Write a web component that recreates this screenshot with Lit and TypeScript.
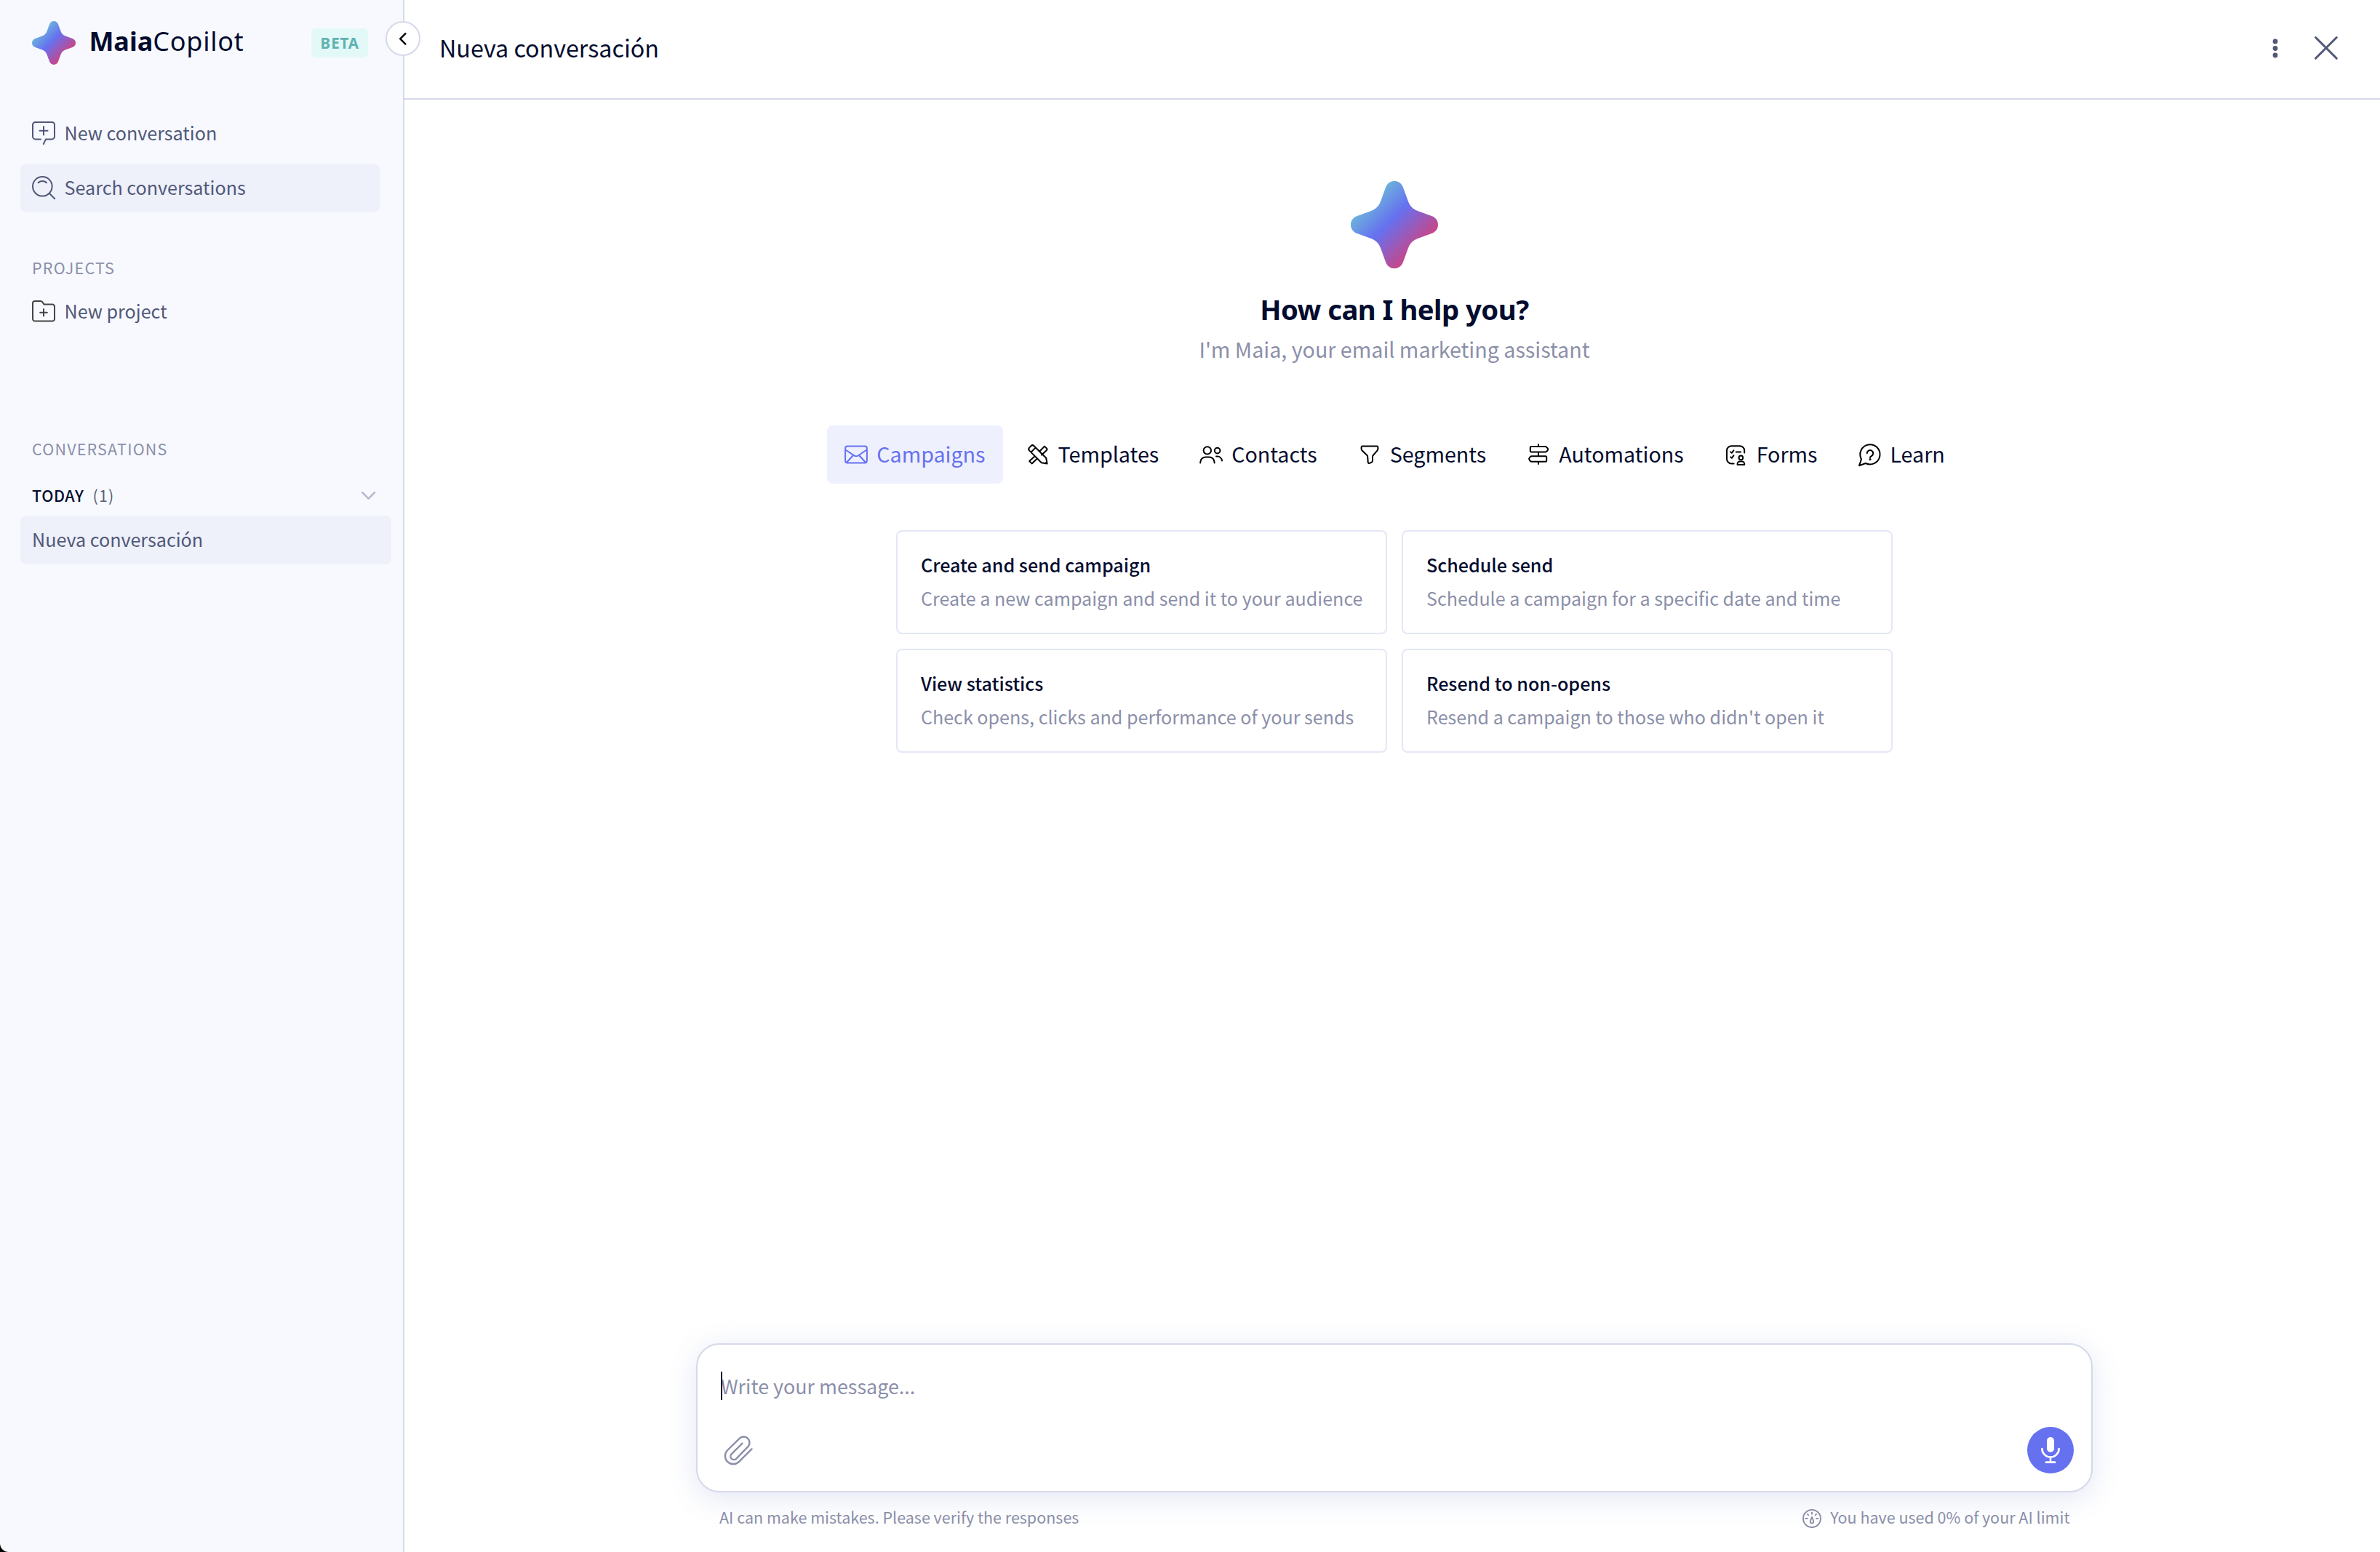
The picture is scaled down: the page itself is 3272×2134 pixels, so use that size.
import { LitElement, html, css, svg, TemplateResult, SVGTemplateResult } from "lit";
import { customElement, state } from "lit/decorators.js";

const glyphs: Record<string, SVGTemplateResult> = {
  chat: svg`<path d="M12 24.4H4.6A3.6 3.6 0 0 1 1 20.8V4.6A3.6 3.6 0 0 1 4.6 1H27.4A3.6 3.6 0 0 1 31 4.6V20.8A3.6 3.6 0 0 1 27.4 24.4H19L15.8 31M16 7v11.4M10.5 12.7h11"/>`,
  search: svg`<circle cx="14.3" cy="14.3" r="13.3"/><path d="M24 24l7.2 7.2M8.6 9.2c2.8-2.9 8.6-2.9 11.4 0"/>`,
  folder: svg`<path d="M1 26.5V5A3 3 0 0 1 4 2H11.8a3 3 0 0 1 2.4 1.2L16.6 6.6H28a3 3 0 0 1 3 3V26.5a3 3 0 0 1-3 3H4a3 3 0 0 1-3-3ZM16 13v9.6M11.2 17.8h9.6"/>`,
  mail: svg`<rect x="1.1" y="4.4" width="29.8" height="23.2" rx="3"/><path d="M2.2 10l10.6 7.2a5.6 5.6 0 0 0 6.4 0L29.8 10M3 26.8l8.8-9.6M29 26.8l-8.8-9.6"/>`,
  design: svg`<path d="M4.2 10.6a3 3 0 0 1 0-4.2L6.4 4.2a3 3 0 0 1 4.2 0L27.2 20.8 28.6 28.6 20.8 27.2ZM6.6 12.6l6-6M26 28.2l2.2-2.2M18.6 11.2L25 4.6l3 3a1.6 1.6 0 0 1 0 2.4l-7 6.6M11.4 18.4L4.2 25l3.4 3.4 7-6.6"/>`,
  people: svg`<circle cx="10.8" cy="10.4" r="5.2"/><path d="M1.2 27.6V26.8a7.4 7.4 0 0 1 7.4-7.4h4.6a7.4 7.4 0 0 1 7.4 7.4V27.6M23 18.4h1.4a6.6 6.6 0 0 1 6.6 6"/><circle cx="24.6" cy="10.6" r="3.8"/>`,
  funnel: svg`<path d="M6 4.6H26a1.4 1.4 0 0 1 1.4 1.4V8a4 4 0 0 1-1 2.6L20.8 17a3 3 0 0 0-.8 2V24.6a2 2 0 0 1-1 1.7l-3 1.6a1.6 1.6 0 0 1-2.3-1.4L13.2 19a3.4 3.4 0 0 0-.8-2L5.6 10.6A4 4 0 0 1 4.6 8V6A1.4 1.4 0 0 1 6 4.6Z"/>`,
  signpost: svg`<path d="M16 2V5M16 12.6v5.6M16 25.8v3.2M6.2 5H25.4a2.4 2.4 0 0 1 1.8.8l1.6 1.8a1.8 1.8 0 0 1 0 2.4l-1.6 1.8a2.4 2.4 0 0 1-1.8.8H6.2A1.4 1.4 0 0 1 4.8 11.2V6.4A1.4 1.4 0 0 1 6.2 5ZM25.8 18.2H6.6a2.4 2.4 0 0 0-1.8.8L3.6 20.6a2 2 0 0 0 0 2.6l1.2 1.8a2.4 2.4 0 0 0 1.8.8H25.8A1.4 1.4 0 0 0 27.2 24.4V19.6A1.4 1.4 0 0 0 25.8 18.2Z"/>`,
  form: svg`<g transform="translate(1 0.4)"><path d="M11.6 28H8.4A6.4 6.4 0 0 1 2 21.6V10.2A6.4 6.4 0 0 1 8.4 3.8H19.8A6.4 6.4 0 0 1 26.2 10.2V13.2M7.2 12l1.6 1.4 2.6-3.4M7.2 19l1.6 1.4 2.6-3.4M14.8 12.2h6.4"/><circle cx="21.4" cy="20" r="2.8"/><path d="M16.6 29.6v-1.2a3.4 3.4 0 0 1 3.4-3.4h2.8a3.4 3.4 0 0 1 3.4 3.4v1.2Z"/></g>`,
  help: svg`<path d="M2 31.2L5 22.4A13.6 13.6 0 1 1 10.8 28Z"/><path d="M12.8 14.2a4.2 4.2 0 1 1 6.4 3.6c-1.5.9-2.2 1.2-2.2 2.2"/><circle cx="17" cy="22.6" r=".6"/>`,
  clip: svg`<path d="M37.5 18.4L20 35.8A11.1 11.1 0 0 1 4.2 20L21.2 3.4A8.1 8.1 0 0 1 32.6 14.8L16.1 31.8A4.6 4.6 0 0 1 9.6 25.3L24.5 10.7"/>`,
  mic: svg`<rect x="11" y="0" width="10" height="20.7" rx="5" fill="currentColor" stroke="none"/><path d="M4.4 16a11.6 11.6 0 0 0 23.2 0M16 27.6v7M9.8 34.6h12.4"/>`,
  gauge: svg`<circle cx="13" cy="13" r="12"/><path d="M13 4.6v2.2M4.4 13h2.4M19.2 13h2.4M7 7l1.3 1.3M19 7l-1.3 1.3M13 11c-1 2.6-2.2 4.4-2.2 6.2a2.2 2.2 0 0 0 4.4 0C15.2 15.4 14 13.6 13 11Z"/>`,
  left: svg`<path d="M8.4 1.2L1.2 8.4l7.2 7.2"/>`,
  down: svg`<path d="M1.2 1.2L9.6 9.6 18 1.2"/>`,
  close: svg`<path d="M1.5 1.5l28.8 28.8M30.3 1.5L1.5 30.3"/>`,
  dots: svg`<g fill="currentColor" stroke="none"><circle cx="4" cy="4" r="3.4"/><circle cx="4" cy="13.5" r="3.4"/><circle cx="4" cy="23" r="3.4"/></g>`,
};

const icon = (name: string, w = 32, h = 32, stroke = 2): TemplateResult => html`<svg
  class="icon" width=${w} height=${h} viewBox="0 0 ${w} ${h}" fill="none" stroke="currentColor"
  stroke-width=${stroke} stroke-linecap="round" stroke-linejoin="round" aria-hidden="true">${glyphs[name]}</svg>`;

@customElement("maia-star")
class MaiaStar extends LitElement {
  static styles = css`
    :host { display: block; flex: none; }
    svg { display: block; width: 100%; height: 100%; }
  `;
  render() {
    return html`<svg viewBox="0 0 120 120">
      <defs>
        <linearGradient id="g" gradientUnits="userSpaceOnUse" x1="26" y1="26" x2="94" y2="94">
          <stop offset="0" stop-color="#6cb3dc" />
          <stop offset="0.42" stop-color="#6671f0" />
          <stop offset="1" stop-color="#cb4484" />
        </linearGradient>
      </defs>
      <path fill="url(#g)" d="M60 0C65.5 0 70 3.2 72 8.8L79 28C81.5 34.5 85.5 38.5 92 41L111.2 48C116.8 50 120 54.5 120 60C120 65.5 116.8 70 111.2 72L92 79C85.5 81.5 81.5 85.5 79 92L72 111.2C70 116.8 65.5 120 60 120C54.5 120 50 116.8 48 111.2L41 92C38.5 85.5 34.5 81.5 28 79L8.8 72C3.2 70 0 65.5 0 60C0 54.5 3.2 50 8.8 48L28 41C34.5 38.5 38.5 34.5 41 28L48 8.8C50 3.2 54.5 0 60 0Z" />
    </svg>`;
  }
}

const shared = css`
  * { box-sizing: border-box; margin: 0; }
  button { font: inherit; color: inherit; background: none; border: 0; padding: 0; text-align: left; }
  .icon { display: block; flex: none; overflow: visible; }
`;

@customElement("maia-sidebar")
class MaiaSidebar extends LitElement {
  static styles = [shared, css`
    :host {
      display: flex; flex-direction: column; flex: none; position: relative; box-sizing: border-box;
      width: 556px; background: #f8f9ff; border-right: 2px solid #d5d9e9; color: #505878;
      border-bottom-left-radius: 12px; padding: 29px 16px 0 28px; font-size: 25.12px;
    }
    .brand { display: flex; align-items: center; height: 60px; padding: 0 32px 0 16px; }
    .brand maia-star { width: 60px; height: 60px; }
    .name {
      flex: 1; margin: -4px 0 0 18.4px; font-family: "Noto Sans", sans-serif; font-size: 36px;
      line-height: 50px; color: #030c2e; white-space: nowrap;
    }
    .name b { font-weight: 700; }
    .name span { letter-spacing: 0.75px; }
    .beta {
      width: 78px; height: 40px; padding-left: 12.6px; border-radius: 6px; background: #e3f9f8;
      color: #5fb2b1; font: 700 20.6px/40px "Noto Sans", sans-serif; letter-spacing: 0.87px;
    }
    .toggle {
      position: absolute; top: 29px; right: -24px; width: 48px; height: 48px; border-radius: 50%;
      border: 2px solid #d5d9e9; background: #fff; color: #000; display: flex; align-items: center;
      justify-content: center;
    }
    .actions { display: flex; flex-direction: column; gap: 8px; margin: 60.5px 16px 0 0; }
    .row {
      display: flex; align-items: center; gap: 12.6px; height: 67px; padding: 0 16px; border-radius: 8px;
      white-space: nowrap;
    }
    .row span { margin-top: -2px; line-height: 40px; }
    .filled { background: #eef0fa; }
    .caption {
      padding-left: 16px; font-size: 21.5px; line-height: 36px; font-weight: 400; letter-spacing: 1.2px;
      color: #8b8fa9;
    }
    .projects { margin-top: 58.6px; }
    .project { margin-top: 8.4px; }
    .project .icon { color: #444; }
    .history { margin-top: 137.5px; }
    .group {
      display: flex; align-items: center; gap: 12px; margin-top: 28px; padding: 0 22px 0 16px;
      font-size: 21.5px; line-height: 36px;
    }
    .group b { font-weight: 500; letter-spacing: 0.6px; color: #030c2e; }
    .group span { flex: 1; letter-spacing: 1.2px; color: #5b5e72; }
    .group .icon { color: #b3b6cb; }
    .conversation { margin-top: 10px; }
  `];
  render() {
    return html`
      <div class="brand">
        <maia-star></maia-star>
        <div class="name"><b>Maia</b><span>Copilot</span></div>
        <span class="beta">BETA</span>
      </div>
      <button class="toggle">${icon("left", 9.6, 16.8, 2.4)}</button>
      <nav class="actions">
        <button class="row">${icon("chat")}<span>New conversation</span></button>
        <button class="row filled">${icon("search")}<span>Search conversations</span></button>
      </nav>
      <h3 class="caption projects">PROJECTS</h3>
      <button class="row project">${icon("folder")}<span>New project</span></button>
      <h3 class="caption history">CONVERSATIONS</h3>
      <div class="group"><b>TODAY</b><span>(1)</span>${icon("down", 19.2, 10.8, 2.4)}</div>
      <button class="row filled conversation"><span>Nueva conversación</span></button>
    `;
  }
}

@customElement("maia-composer")
class MaiaComposer extends LitElement {
  static styles = [shared, css`
    :host { display: block; width: 1920px; }
    .box {
      display: flex; flex-direction: column; justify-content: space-between; height: 205px;
      padding: 37px 24px 24px 32px; border: 2px solid #d5d9e9; border-radius: 32px; background: #fff;
      box-shadow: 0 8px 40px rgba(80, 105, 185, 0.16);
    }
    .input {
      display: flex; align-self: flex-start; height: 39px; line-height: 39px;
      font-size: 26.9px; color: #8b8fa9; white-space: nowrap;
    }
    .caret { width: 2px; margin-right: -2px; background: #030c2e; z-index: 1; }
    .tools { display: flex; align-items: center; justify-content: space-between; padding-left: 5px; color: #8b8fa9; }
    .mic {
      display: flex; align-items: center; justify-content: center; width: 64px; height: 64px;
      border-radius: 50%; background: #6671f0; color: #fff;
    }
    .notes {
      display: flex; justify-content: space-between; padding: 0 31.5px 0 32px; margin-top: 16px;
      font-size: 21.5px; line-height: 36px; color: #8b8fa9; white-space: nowrap;
    }
    .usage { display: flex; align-items: center; gap: 12.4px; margin-top: -1px; }
    .usage .icon { margin-top: 4px; }
  `];
  render() {
    return html`
      <div class="box">
        <div class="input"><i class="caret"></i><span>Write your message...</span></div>
        <div class="tools">
          <button>${icon("clip", 40, 40, 2.4)}</button>
          <button class="mic">${icon("mic", 32, 36, 2.6)}</button>
        </div>
      </div>
      <div class="notes">
        <span>AI can make mistakes. Please verify the responses</span>
        <span class="usage">${icon("gauge", 26, 26, 1.9)}You have used 0% of your AI limit</span>
      </div>
    `;
  }
}

const tabs: [string, string][] = [
  ["mail", "Campaigns"], ["design", "Templates"], ["people", "Contacts"], ["funnel", "Segments"],
  ["signpost", "Automations"], ["form", "Forms"], ["help", "Learn"],
];

const suggestions: [string, string][] = [
  ["Create and send campaign", "Create a new campaign and send it to your audience"],
  ["Schedule send", "Schedule a campaign for a specific date and time"],
  ["View statistics", "Check opens, clicks and performance of your sends"],
  ["Resend to non-opens", "Resend a campaign to those who didn't open it"],
];

@customElement("app-root")
class AppRoot extends LitElement {
  @state() private active = "Campaigns";

  static styles = [shared, css`
    :host {
      display: flex; height: 2134px; background: #000; color: #030c2e; overflow: hidden;
      font-family: "Noto Sans CJK SC", "Open Sans", sans-serif;
    }
    .main { flex: 1; display: flex; flex-direction: column; min-width: 0; background: #fff; }
    .header {
      display: flex; align-items: center; height: 137px; border-bottom: 2px solid #d5d9e9;
      padding: 0 58px 3px 48px; color: #505878;
    }
    .header h1 { flex: 1; font-size: 32.26px; font-weight: 400; line-height: 50px; color: #030c2e; margin-top: -2px; }
    .header .close { margin-left: 50px; }
    .body { flex: 1; display: flex; flex-direction: column; align-items: center; padding: 112px 0 30px 6px; }
    .hero { width: 120px; height: 120px; }
    .title {
      margin-top: 31.5px; font: 700 38.3px/48px "Noto Sans", sans-serif; letter-spacing: -0.54px;
    }
    .sub { margin-top: 9.5px; font-size: 28.68px; line-height: 44px; color: #8b8fa9; }
    .tabs { display: flex; gap: 8px; margin-top: 83px; padding-left: 1px; }
    .tab {
      display: flex; align-items: center; gap: 12px; height: 80px; padding: 0 24px; border-radius: 8px;
      font-size: 28.65px; white-space: nowrap;
    }
    .tab .icon { color: #000; }
    .tab span { margin-top: -2px; line-height: 44px; }
    .tab.on { background: #eef0fd; color: #6671f0; }
    .tab.on .icon { color: #6671f0; }
    .cards { display: grid; grid-template-columns: 675px 675px; grid-auto-rows: 143px; gap: 20px; margin-top: 64px; }
    .card {
      display: flex; flex-direction: column; gap: 6px; padding: 25px 32px 0; border: 2px solid #e4e7f6;
      border-radius: 8px; white-space: nowrap; font-size: 25.08px; line-height: 40px;
    }
    .card b { font-weight: 500; }
    .card span { color: #8b8fa9; }
    maia-composer { margin-top: auto; }
  `];

  render() {
    return html`
      <maia-sidebar></maia-sidebar>
      <main class="main">
        <header class="header">
          <h1>Nueva conversación</h1>
          <button>${icon("dots", 8, 27)}</button>
          <button class="close">${icon("close", 31.8, 31.8, 3)}</button>
        </header>
        <div class="body">
          <maia-star class="hero"></maia-star>
          <h2 class="title">How can I help you?</h2>
          <p class="sub">I'm Maia, your email marketing assistant</p>
          <div class="tabs">
            ${tabs.map(([glyph, label]) => html`<button
              class="tab ${label === this.active ? "on" : ""}" @click=${() => (this.active = label)}
            >${icon(glyph)}<span>${label}</span></button>`)}
          </div>
          <div class="cards">
            ${suggestions.map(([name, text]) => html`<div class="card"><b>${name}</b><span>${text}</span></div>`)}
          </div>
          <maia-composer></maia-composer>
        </div>
      </main>
    `;
  }
}
